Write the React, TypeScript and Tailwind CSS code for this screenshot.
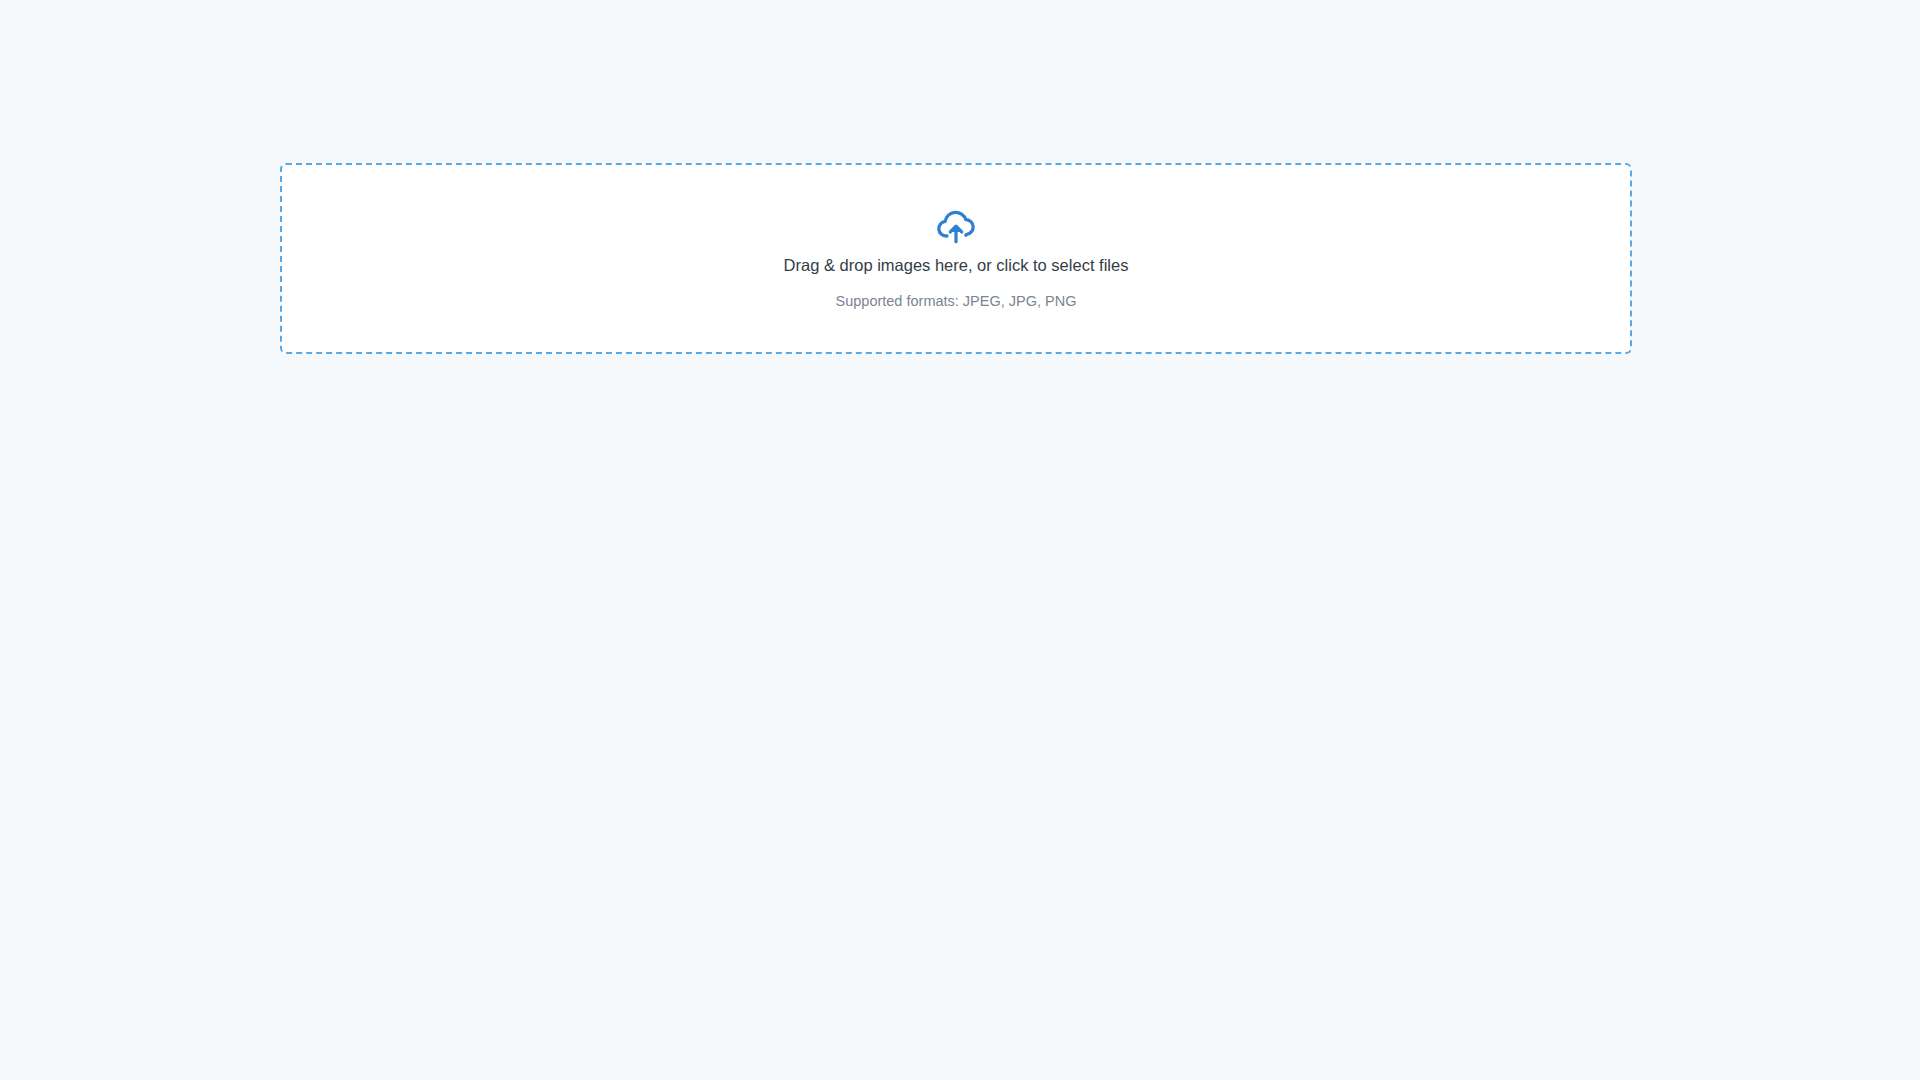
export default function App() {
	return (
		<div className="min-h-screen w-full bg-[#f5f9fc] pt-[163px]" style={{ fontFamily: "'Liberation Sans', Arial, sans-serif" }}>
			<div className="ml-[280px] flex h-[191px] w-[1352px] cursor-pointer flex-col items-center rounded-[6px] border-2 border-dashed border-[#5aa9e6] bg-white pt-[44px]">
				<svg width="40" height="36" viewBox="0 0 24 22" fill="none" stroke="#2f80d1" strokeWidth="2" strokeLinecap="round" strokeLinejoin="round">
					<path d="M6.5 16.5H6a4.5 4.5 0 0 1-.6-8.96A6.5 6.5 0 0 1 18 6.5a4.5 4.5 0 0 1 .6 8.96L18 16" />
					<path d="M12 20v-9" />
					<path d="M8.5 14 12 10.5 15.5 14" fill="#2f80d1" />
				</svg>
				<p className="mt-[8px] text-[16.5px] text-[#333d47]">Drag &amp; drop images here, or click to select files</p>
				<p className="mt-[13px] text-[14.5px] text-[#7a8591]">Supported formats: JPEG, JPG, PNG</p>
			</div>
		</div>
	);
}
